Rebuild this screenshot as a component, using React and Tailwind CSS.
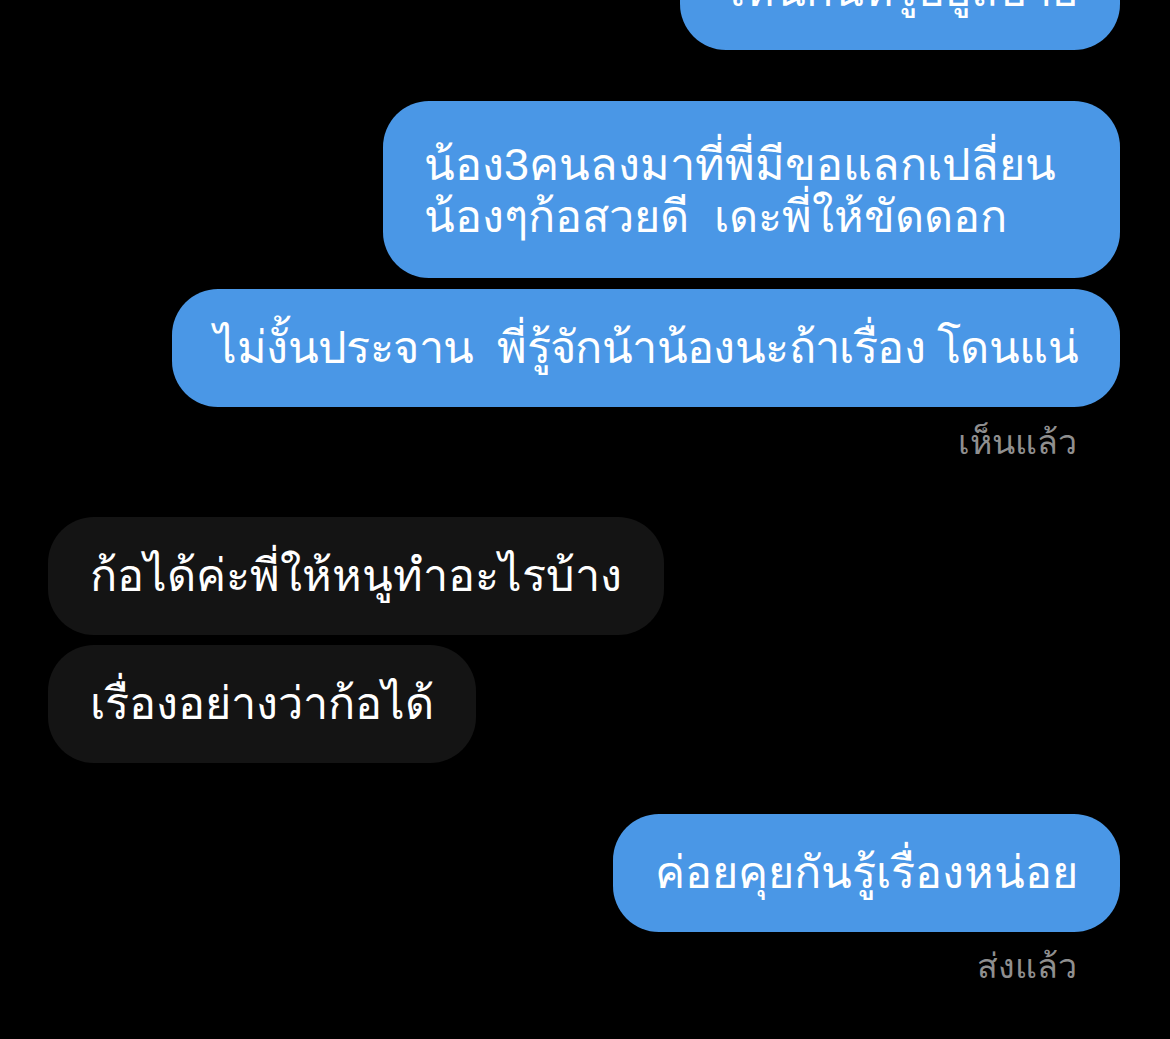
import React from "react";

const FONT = "font-['Liberation_Sans',sans-serif]";

function Out({ children, className = "" }) {
  return (
    <div
      className={`self-end mr-[50px] whitespace-pre rounded-[46px] bg-[#4a97e6] text-[45px] leading-[52px] text-white ${className}`}
    >
      {children}
    </div>
  );
}

function In({ children, className = "" }) {
  return (
    <div
      className={`self-start ml-[48px] rounded-[46px] bg-[#141414] px-[42px] py-[33px] text-[45px] leading-[52px] text-white ${className}`}
    >
      {children}
    </div>
  );
}

function Status({ children, className = "" }) {
  return (
    <div className={`self-end mr-[93px] text-[34px] leading-[40px] text-[#8f8f8f] ${className}`}>
      {children}
    </div>
  );
}

export default function App() {
  return (
    <div className={`flex h-[1039px] flex-col overflow-hidden bg-black ${FONT}`}>
      <Out className="mt-[-68px] px-[42px] py-[33px]">ไหนกันหรูอยู่สบาย</Out>
      <Out className="mt-[51px] pl-[41px] pr-[64px] pt-[38px] pb-[35px]">
        {"น้อง3คนลงมาที่พี่มีขอแลกเปลี่ยน\nน้องๆก้อสวยดี  เดะพี่ให้ขัดดอก"}
      </Out>
      <Out className="mt-[11px] px-[42px] py-[33px] tracking-[-0.6px]">
        {"ไม่งั้นประจาน  พี่รู้จักน้าน้องนะถ้าเรื่อง โดนแน่"}
      </Out>
      <Status className="mt-[15px]">เห็นแล้ว</Status>

      <In className="mt-[55px]">ก้อได้ค่ะพี่ให้หนูทำอะไรบ้าง</In>
      <In className="mt-[10px]">เรื่องอย่างว่าก้อได้</In>

      <Out className="mt-[51px] px-[42px] py-[33px]">ค่อยคุยกันรู้เรื่องหน่อย</Out>
      <Status className="mt-[14px]">ส่งแล้ว</Status>
    </div>
  );
}
